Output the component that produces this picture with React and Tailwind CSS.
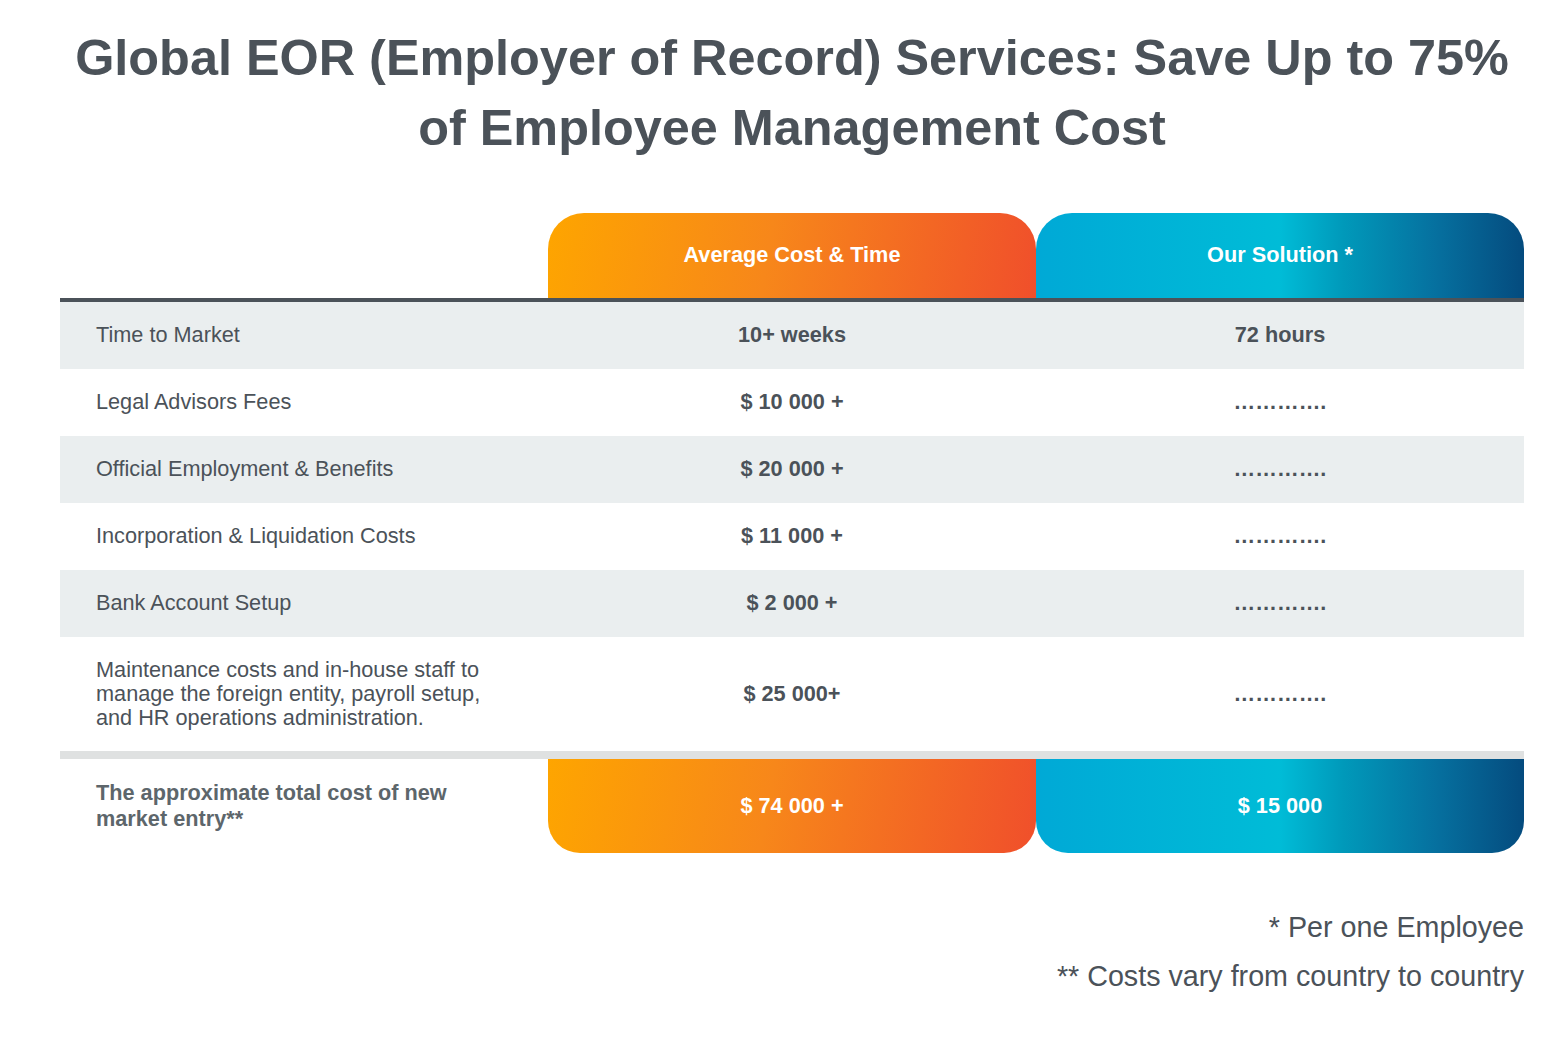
import React from "react";

const rows = [
  { label: "Time to Market", avg: "10+ weeks", ours: "72 hours", gray: true },
  { label: "Legal Advisors Fees", avg: "$ 10 000 +", ours: "…………." },
  { label: "Official Employment & Benefits", avg: "$ 20 000 +", ours: "………….", gray: true },
  { label: "Incorporation & Liquidation Costs", avg: "$ 11 000 +", ours: "…………." },
  { label: "Bank Account Setup", avg: "$ 2 000 +", ours: "………….", gray: true },
];

export default function App() {
  return (
    <div className="min-h-[1046px] bg-white text-[#4b5259] font-['Liberation_Sans',Arial,sans-serif] pl-[60px] pr-[30px] pt-[23px]">
      <h1 className="text-center text-[50.4px] leading-[70px] font-bold text-[#4b5259]">
        Global EOR (Employer of Record) Services: Save Up to 75%
        <br />
        of Employee Management Cost
      </h1>

      <div className="mt-[50px]">
        <div className="grid grid-cols-3 h-[85px]">
          <div />
          <div className="rounded-t-[36px] bg-[linear-gradient(100deg,#fea500_0%,#f7871a_45%,#f04f2b_100%)] flex items-center justify-center text-white font-bold text-[21.7px]">
            Average Cost &amp; Time
          </div>
          <div className="rounded-t-[36px] bg-[linear-gradient(90deg,#00a9d6_0%,#00bcd7_50%,#0099ba_63%,#06709f_82%,#044b7e_100%)] flex items-center justify-center text-white font-bold text-[21.7px]">
            Our Solution *
          </div>
        </div>
        <div className="h-[4px] bg-[#4b5259]" />

        {rows.map((r, i) => (
          <div
            key={i}
            className={`grid grid-cols-3 h-[67px] items-center text-[21.7px] ${r.gray ? "bg-[#eaeeef]" : "bg-white"}`}
          >
            <div className="pl-[36px]">{r.label}</div>
            <div className="text-center font-bold">{r.avg}</div>
            <div className="text-center font-bold">{r.ours}</div>
          </div>
        ))}

        <div className="grid grid-cols-3 h-[114px] items-center text-[21.7px]">
          <div className="pl-[36px] leading-[24px]">
            Maintenance costs and in-house staff to
            <br />
            manage the foreign entity, payroll setup,
            <br />
            and HR operations administration.
          </div>
          <div className="text-center font-bold">$ 25 000+</div>
          <div className="text-center font-bold">………….</div>
        </div>

        <div className="h-[8px] bg-[#dfe1e1]" />

        <div className="grid grid-cols-3 h-[94px] text-[21.7px]">
          <div className="pl-[36px] flex items-center font-bold text-[#5d666b] leading-[26px]">
            The approximate total cost of new
            <br />
            market entry**
          </div>
          <div className="rounded-b-[32px] bg-[linear-gradient(100deg,#fea500_0%,#f7871a_45%,#f04f2b_100%)] flex items-center justify-center text-white font-bold">
            $ 74 000 +
          </div>
          <div className="rounded-b-[32px] bg-[linear-gradient(90deg,#00a9d6_0%,#00bcd7_50%,#0099ba_63%,#06709f_82%,#044b7e_100%)] flex items-center justify-center text-white font-bold">
            $ 15 000
          </div>
        </div>
      </div>

      <div className="mt-[50px] text-right text-[28.7px] leading-[49px] text-[#4b5259]">
        <div>* Per one Employee</div>
        <div>** Costs vary from country to country</div>
      </div>
    </div>
  );
}
